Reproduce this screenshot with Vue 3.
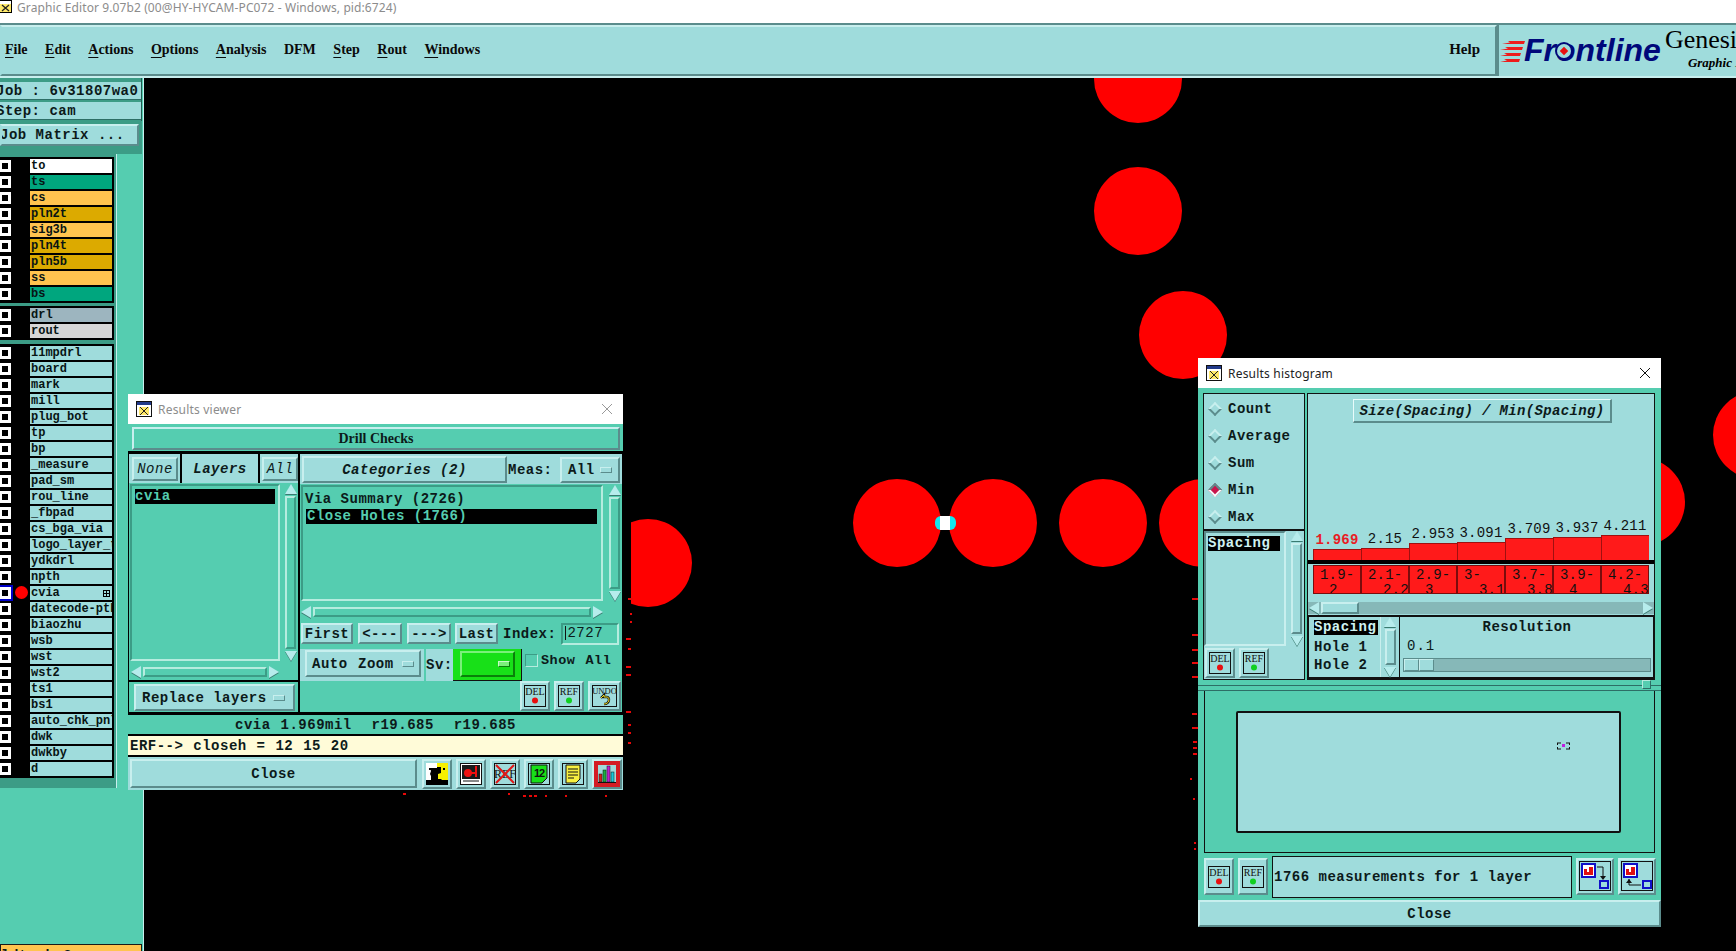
<script setup>
const menus = [
  { k: 'F', r: 'ile' }, { k: 'E', r: 'dit' }, { k: 'A', r: 'ctions' }, { k: 'O', r: 'ptions' },
  { k: 'A', r: 'nalysis' }, { k: '', r: 'DFM' }, { k: 'S', r: 'tep' }, { k: 'R', r: 'out' }, { k: 'W', r: 'indows' },
]

// board / drill / misc layer groups of the matrix column
const boardLayers = [
  { n: 'to', c: '#ffffff' }, { n: 'ts', c: '#00a67e' }, { n: 'cs', c: '#ffc44f' },
  { n: 'pln2t', c: '#dcaa00' }, { n: 'sig3b', c: '#ffc44f' }, { n: 'pln4t', c: '#dcaa00' },
  { n: 'pln5b', c: '#dcaa00' }, { n: 'ss', c: '#ffc44f' }, { n: 'bs', c: '#00a67e' },
]
const drillLayers = [{ n: 'drl', c: '#9db5bf' }, { n: 'rout', c: '#d6d6d6' }]
const miscLayers = ['11mpdrl', 'board', 'mark', 'mill', 'plug_bot', 'tp', 'bp', '_measure', 'pad_sm', 'rou_line',
  '_fbpad', 'cs_bga_via', 'logo_layer_top', 'ydkdrl', 'npth', 'cvia', 'datecode-pth', 'biaozhu', 'wsb', 'wst',
  'wst2', 'ts1', 'bs1', 'auto_chk_pnl', 'dwk', 'dwkby', 'd']

const circles = [[1138, 78], [1138, 210], [1183, 334], [897, 522], [993, 522], [1103, 522], [1203, 522], [648, 562], [1641, 501], [1757, 434]]
const dots = [[628, 597, 5], [630, 612, 2], [630, 620, 2], [626, 637, 5], [628, 647, 3], [626, 665, 5], [626, 673, 5],
  [626, 710, 5], [628, 723, 3], [628, 731, 3], [628, 741, 3], [403, 792, 3], [508, 792, 2], [523, 794, 3], [529, 794, 3],
  [534, 794, 3], [545, 794, 2], [565, 794, 2], [605, 794, 2], [1192, 597, 6], [1192, 633, 6], [1192, 648, 6], [1192, 661, 6],
  [1192, 675, 6], [1192, 712, 5], [1192, 726, 6], [1193, 740, 4], [1193, 746, 4], [1193, 752, 4], [1190, 777, 2], [1193, 797, 2], [1194, 841, 2], [1194, 847, 2]]

const bars = [
  { v: '1.969', h: 11, min: true, a: '1.9-', b: '2', i: 9 },
  { v: '2.15', h: 12, a: '2.1-', b: '2.2', i: 15 },
  { v: '2.953', h: 17, a: '2.9-', b: '3', i: 9 },
  { v: '3.091', h: 18, a: '3-', b: '3.1', i: 15 },
  { v: '3.709', h: 22, a: '3.7-', b: '3.8', i: 15 },
  { v: '3.937', h: 23, a: '3.9-', b: '4', i: 9 },
  { v: '4.211', h: 25, a: '4.2-', b: '4.3', i: 15 },
]
const stats = [
  { n: 'Count' }, { n: 'Average' }, { n: 'Sum' }, { n: 'Min', on: true }, { n: 'Max' },
]
const statusLine = 'cvia 1.969mil  r19.685  r19.685'
</script>

<template>
  <div class="screen mono">
    <div class="apptitle">
      <svg class="appicon" width="13" height="13" viewBox="0 0 13 13"><rect x="0.5" y="0.5" width="12" height="12" fill="#fff" stroke="#000"/><rect x="1" y="4" width="11" height="8" fill="#ffe96a"/><path d="M3 5l7 6M10 5l-7 6" stroke="#222" stroke-width="1.3"/></svg>
      <span>Graphic Editor 9.07b2 (00@HY-HYCAM-PC072 - Windows, pid:6724)</span>
    </div>

    <div class="menubar">
      <div class="menus">
        <span v-for="m in menus" :key="m.r"><u>{{ m.k }}</u>{{ m.r }}</span>
        <span class="help">Help</span>
      </div>
      <div class="logo">
        <svg class="speed" width="25" height="24" viewBox="0 0 25 24"><path d="M8 1h17l-1 3H2l8-1.500zM5 7h18l-1 3H0l8-1.500zM4 13h17l-1 3H0l7-1.500zM4 19h16l-1 3H0l7-1.500z" fill="#ee1c1c"/></svg>
        <span class="frontline">Fr<span class="oh">o<i></i></span>ntline</span>
        <div class="genesis">
          <span class="gen">Genesis 2000</span>
          <span class="gra">Graphic Editor</span>
        </div>
      </div>
    </div>

    <div class="main">
      <aside class="side">
        <div class="infobox">
          <div class="info"><span class="cut">Job : 6v31807wa0</span></div>
          <div class="info"><span class="cut">Step: cam</span></div>
        </div>
        <div class="matrixbox">
          <div class="matrixbtn"><span class="cut2">Job Matrix ...</span></div>
        </div>
        <div class="layers">
          <div class="group">
            <div v-for="l in boardLayers" :key="l.n" class="lrow">
              <span class="chk"></span><span class="lbl" :style="{ background: l.c }">{{ l.n }}</span>
            </div>
          </div>
          <div class="group">
            <div v-for="l in drillLayers" :key="l.n" class="lrow">
              <span class="chk"></span><span class="lbl" :style="{ background: l.c }">{{ l.n }}</span>
            </div>
          </div>
          <div class="group">
            <div v-for="n in miscLayers" :key="n" class="lrow">
              <span class="chk" :class="{ cur: n === 'cvia' }"></span>
              <span v-if="n === 'cvia'" class="reddot"></span>
              <span class="lbl plain">{{ n }}<svg v-if="n === 'cvia'" class="aff" width="7" height="7" viewBox="0 0 7 7"><rect x=".5" y=".5" width="6" height="6" fill="none" stroke="#000"/><path d="M3.5 1v5M1 3.500h5" stroke="#000"/></svg></span>
            </div>
          </div>
        </div>
        <div class="sideyellow">ldt ab  8</div>
      </aside>

      <div class="canvas">
        <svg width="1592" height="873" viewBox="144 77 1592 873">
          <circle v-for="c in circles" :key="c[0] + '-' + c[1]" :cx="c[0]" :cy="c[1]" r="44" fill="#ff0000" />
          <rect x="623" y="480" width="8" height="320" fill="#000" />
          <rect x="935" y="515" width="21" height="14" rx="6" fill="#10e8f0" />
          <rect x="940" y="515" width="10" height="14" fill="#fff" />
          <rect v-for="d in dots" :key="d[0] + '_' + d[1]" :x="d[0]" :y="d[1]" :width="d[2]" height="2" fill="#e80808" />
        </svg>
      </div>
    </div>

    <!-- Results viewer window -->
    <section class="win viewer">
      <header class="wtitle off">
        <svg width="16" height="16" viewBox="0 0 16 16"><rect x=".5" y=".5" width="15" height="15" fill="#fff" stroke="#111"/><rect x="1" y="1" width="14" height="3" fill="#223a8a"/><rect x="3" y="6" width="10" height="8" fill="#ffe96a"/><path d="M4 6l8 8M12 6l-8 8" stroke="#222"/></svg>
        <span>Results viewer</span>
        <svg class="x" width="12" height="12" viewBox="0 0 12 12"><path d="M1 1l10 10M11 1L1 11" stroke="#999" stroke-width="1"/></svg>
      </header>

      <div class="vbtnrow"><div class="rb drill">Drill Checks</div></div>

      <div class="vmid">
        <div class="vleft">
          <div class="lhead">
            <div class="rb none ital thin">None</div>
            <div class="ltitle ital">Layers</div>
            <div class="rb all ital thin">All</div>
          </div>
          <div class="llist">
            <div class="sunk lbox"><div class="sel">cvia</div></div>
            <div class="vs"><i class="up"></i><b></b><i class="down"></i></div>
          </div>
          <div class="hs lhs"><i class="left"></i><b></b><i class="right"></i></div>
          <div class="replace"><div class="rb opt repl">Replace layers<em></em></div></div>
        </div>

        <div class="vright">
          <div class="rhead">
            <div class="rb cat ital">Categories (2)</div>
            <span class="meas">Meas:</span>
            <div class="rb opt allopt">All<em></em></div>
          </div>
          <div class="rlist">
            <div class="sunk rbox">
              <div class="item first-item">Via Summary (2726)</div>
              <div class="item sel">Close Holes (1766)</div>
            </div>
            <div class="vs"><i class="up"></i><b></b><i class="down"></i></div>
          </div>
          <div class="hs rhs"><i class="left"></i><b></b><i class="right"></i></div>
          <div class="nav">
            <div class="rb first">First</div>
            <div class="rb arrow">&lt;---</div>
            <div class="rb arrow">---&gt;</div>
            <div class="rb last">Last</div>
            <span class="idx">Index:</span>
            <div class="indexbox"><span class="caret"></span>2727</div>
          </div>
          <div class="zoomrow">
            <div class="zoombg"><div class="rb opt zoombtn">Auto Zoom<em></em></div></div>
            <div class="svlbl">Sv:</div>
            <div class="svgreen"><div class="svbtn"><em></em></div></div>
            <span class="cb"></span><span class="showall">Show All</span>
          </div>
          <div class="actions">
            <div class="ib">
              <svg width="26" height="26" viewBox="0 0 26 26"><rect x="2.500" y="2.500" width="21" height="21" fill="none" stroke="#111"/><text x="13" y="12" class="tiny">DEL</text><circle cx="13" cy="17.500" r="3" fill="#e81010"/></svg>
            </div>
            <div class="ib">
              <svg width="26" height="26" viewBox="0 0 26 26"><rect x="2.500" y="2.500" width="21" height="21" fill="none" stroke="#111"/><text x="13" y="12" class="tiny">REF</text><circle cx="13" cy="17.500" r="3" fill="#10d020"/></svg>
            </div>
            <div class="ib wide">
              <svg width="29" height="26" viewBox="0 0 29 26"><rect x="2.500" y="2.500" width="24" height="21" fill="none" stroke="#111"/><text x="14.500" y="11" class="tiny undo">UNDO</text><path d="M11 15l3-3v2h3c3 0 3 7-3 7" fill="none" stroke="#111" stroke-width="2.400"/><path d="M11 15l3-3v2h3c3 0 3 7-3 7" fill="none" stroke="#f0e020" stroke-width="1"/></svg>
            </div>
          </div>
        </div>
      </div>

      <div class="vstatus">{{ statusLine }}</div>
      <div class="verf">ERF--&gt; closeh = 12 15 20</div>

      <div class="vbottom">
        <div class="rb closebtn">Close</div>
        <div class="ib">
          <svg width="26" height="26" viewBox="0 0 26 26"><rect x="2" y="2" width="11" height="22" fill="#fff"/><rect x="13" y="2" width="11" height="22" fill="#f6f000"/><path d="M2 24v-5h5v-4l-1-2 1-3-1-3h3l4 0v17z" fill="#000"/><path d="M13 24v-6h1v-5l3-1v-6h-4v-4 0 22zM13 24h11v-5h-6l-1-1h-4z" fill="#000"/><rect x="5" y="7" width="2" height="2" fill="#000"/><rect x="19" y="7" width="2" height="2" fill="#000"/></svg>
        </div>
        <div class="ib">
          <svg width="26" height="26" viewBox="0 0 26 26"><rect x="2.500" y="2.500" width="21" height="21" fill="#fff" stroke="#111"/><rect x="4" y="4" width="18" height="14" fill="#1a1a1a"/><circle cx="10" cy="12" r="4" fill="#f01010"/><path d="M13 12h5M18 5v11" stroke="#f01010" stroke-width="2"/><path d="M5 20h16" stroke="#111"/></svg>
        </div>
        <div class="ib">
          <svg width="26" height="26" viewBox="0 0 26 26"><rect x="2.500" y="2.500" width="21" height="21" fill="none" stroke="#111"/><text x="13" y="17" class="tiny big">REF</text><path d="M4 4l18 18M22 4L4 22" stroke="#e01818" stroke-width="2"/></svg>
        </div>
        <div class="ib">
          <svg width="26" height="26" viewBox="0 0 26 26"><rect x="2.500" y="2.500" width="21" height="21" fill="none" stroke="#111"/><path d="M5 4h16v13l-5 5H5z" fill="#18e018" stroke="#111"/><text x="13" y="16" class="half">12</text></svg>
        </div>
        <div class="ib">
          <svg width="26" height="26" viewBox="0 0 26 26"><rect x="2.500" y="2.500" width="21" height="21" fill="none" stroke="#111"/><path d="M6 4h14v14l-4 4H6z" fill="#f8f040" stroke="#111"/><path d="M8 8h10M8 11h10M8 14h10M8 17h6" stroke="#111"/></svg>
        </div>
        <div class="ib chartbtn">
          <svg width="26" height="26" viewBox="0 0 26 26"><rect x="2" y="2" width="22" height="22" fill="#9fdcdc" stroke="#d41c24" stroke-width="4"/><path d="M4 21.500h18" stroke="#111"/><rect x="5" y="13" width="3" height="8" fill="#d02020" stroke="#111" stroke-width=".5"/><rect x="9" y="9" width="3" height="12" fill="#18b040" stroke="#111" stroke-width=".5"/><rect x="13" y="5" width="3" height="16" fill="#c020d0" stroke="#111" stroke-width=".5"/><rect x="17" y="11" width="3" height="10" fill="#18c8d8" stroke="#111" stroke-width=".5"/></svg>
        </div>
      </div>
    </section>

    <!-- Results histogram window -->
    <section class="win histo">
      <header class="wtitle">
        <svg width="16" height="16" viewBox="0 0 16 16"><rect x=".5" y=".5" width="15" height="15" fill="#fff" stroke="#111"/><rect x="1" y="1" width="14" height="3" fill="#223a8a"/><rect x="3" y="6" width="10" height="8" fill="#ffe96a"/><path d="M4 6l8 8M12 6l-8 8" stroke="#222"/></svg>
        <span>Results histogram</span>
        <svg class="x" width="12" height="12" viewBox="0 0 12 12"><path d="M1 1l10 10M11 1L1 11" stroke="#111" stroke-width="1"/></svg>
      </header>

      <div class="htop">
        <div class="hleft">
          <div class="radios">
            <div v-for="s in stats" :key="s.n" class="radio">
              <span class="dia" :class="{ on: s.on }"></span>{{ s.n }}
            </div>
          </div>
          <div class="hlist">
            <div class="sunk hbox"><div class="sel">Spacing</div></div>
            <div class="vs"><i class="up"></i><b></b><i class="down"></i></div>
          </div>
          <div class="hbtns">
            <div class="ib">
              <svg width="26" height="26" viewBox="0 0 26 26"><rect x="2.500" y="2.500" width="21" height="21" fill="none" stroke="#111"/><text x="13" y="12" class="tiny">DEL</text><circle cx="13" cy="17.500" r="3" fill="#e81010"/></svg>
            </div>
            <div class="ib">
              <svg width="26" height="26" viewBox="0 0 26 26"><rect x="2.500" y="2.500" width="21" height="21" fill="none" stroke="#111"/><text x="13" y="12" class="tiny">REF</text><circle cx="13" cy="17.500" r="3" fill="#10d020"/></svg>
            </div>
          </div>
        </div>

        <div class="hright">
          <div class="graph">
            <div class="gtitle"><span>Size(Spacing) / Min(Spacing)</span></div>
            <div class="gbars">
              <div v-for="b in bars" :key="b.v" class="gcol">
                <span class="gval" :class="{ min: b.min }">{{ b.v }}</span>
                <div class="gbar" :style="{ height: b.h + 'px' }"></div>
              </div>
            </div>
            <div class="gaxis"></div>
            <div class="glabels">
              <div v-for="b in bars" :key="b.a" class="glabel">
                <span>{{ b.a }}</span>
                <span :style="{ paddingLeft: b.i + 'px' }">{{ b.b }}</span>
              </div>
            </div>
            <div class="hs ghs"><i class="left"></i><b></b><i class="right"></i></div>
          </div>
          <div class="under">
            <div class="ulist">
              <div class="sel">Spacing</div>
              <div>Hole 1</div>
              <div>Hole 2</div>
            </div>
            <div class="vs uvs"><i class="up"></i><b></b><i class="down"></i></div>
            <div class="resol">
              <div class="rtitle">Resolution</div>
              <div class="rval">0.1</div>
              <div class="slider"><b></b><b></b></div>
            </div>
          </div>
        </div>
      </div>

      <div class="sash"><span></span></div>

      <div class="preview">
        <div class="pinner">
          <svg class="mark" width="13" height="8" viewBox="0 0 13 8"><path d="M0 1h4M9 1h4M0 7h4M9 7h4M.5 1v2M12.500 1v2M.5 5v2M12.500 5v2" stroke="#111" fill="none"/><rect x="5" y="2" width="3" height="3" fill="#c020e0"/></svg>
        </div>
      </div>

      <div class="hfoot">
        <div class="ib">
          <svg width="26" height="26" viewBox="0 0 26 26"><rect x="2.500" y="2.500" width="21" height="21" fill="none" stroke="#111"/><text x="13" y="12" class="tiny">DEL</text><circle cx="13" cy="17.500" r="3" fill="#e81010"/></svg>
        </div>
        <div class="ib">
          <svg width="26" height="26" viewBox="0 0 26 26"><rect x="2.500" y="2.500" width="21" height="21" fill="none" stroke="#111"/><text x="13" y="12" class="tiny">REF</text><circle cx="13" cy="17.500" r="3" fill="#10d020"/></svg>
        </div>
        <div class="hmsg">1766 measurements for 1 layer</div>
        <div class="ib swap">
          <svg width="34" height="32" viewBox="0 0 34 32"><rect x="1.500" y="1.500" width="31" height="29" fill="none" stroke="#111"/><rect x="4" y="4" width="13" height="13" fill="#fff" stroke="#1010c8" stroke-width="2"/><path d="M6 15v-6h3v3h2V7h4v8z" fill="#e01010"/><path d="M19 7h6v11" fill="none" stroke="#111"/><path d="M22 16h6l-3 4z" fill="#111"/><rect x="22" y="21" width="8" height="7" fill="none" stroke="#1010c8" stroke-width="2"/></svg>
        </div>
        <div class="ib swap">
          <svg width="34" height="32" viewBox="0 0 34 32"><rect x="1.500" y="1.500" width="31" height="29" fill="none" stroke="#111"/><rect x="4" y="4" width="13" height="13" fill="#fff" stroke="#1010c8" stroke-width="2"/><path d="M6 15v-6h3v3h2V7h4v8z" fill="#e01010"/><path d="M9 19v6h12" fill="none" stroke="#111"/><path d="M6 23h6l-3-4z" fill="#111"/><rect x="23" y="21" width="8" height="7" fill="none" stroke="#1010c8" stroke-width="2"/></svg>
        </div>
      </div>

      <div class="rb hclose">Close</div>
    </section>
  </div>
</template>

<style>
html, body { margin: 0; background: #000; overflow: hidden; }
</style>

<style scoped>
.screen {
  width: 1736px;
  height: 951px;
  position: relative;
  overflow: hidden;
  background: #000;
  display: flex;
  flex-direction: column;
}
.mono {
  font-family: "Liberation Mono", monospace;
  font-weight: bold;
  font-size: 14px;
  letter-spacing: 0.5px;
  color: #0c1a1a;
}
.apptitle {
  height: 23px;
  background: #fff;
  display: flex;
  align-items: center;
  gap: 5px;
  font: 12px "Noto Sans", sans-serif;
  letter-spacing: 0.1px;
  color: #8c8c8c;
  padding-bottom: 8px;
  box-sizing: border-box;
}
.appicon { flex: none; margin-top: -2px; margin-left: -1px; }

.menubar {
  height: 55px;
  display: flex;
  background: #9fdcdc;
  border-top: 2px solid #5b8c8c;
  border-bottom: 2px solid #c8efee;
  box-sizing: border-box;
}
.menus {
  flex: 1;
  display: flex;
  align-items: center;
  gap: 17.5px;
  padding: 0 15px 2px 3px;
  border: 2px solid;
  border-color: #c8efee #5b8c8c #5b8c8c transparent;
  font: bold 14px "Liberation Serif", serif;
  letter-spacing: 0;
  color: #0a0a0a;
}
.menus u { text-underline-offset: 3px; }
.help { margin-left: auto; font-size: 15px; }
.logo {
  width: 239px;
  flex: none;
  position: relative;
  display: flex;
  align-items: center;
  padding-left: 1px;
  box-sizing: border-box;
  border-left: 2px solid #5b8c8c;
  overflow: hidden;
}
.speed { flex: none; margin-top: 2px; }
.frontline {
  font: italic bold 32px "Liberation Sans", sans-serif;
  letter-spacing: 0;
  color: #00087a;
  margin-left: -1px;
}
.oh { position: relative; }
.oh i {
  position: absolute;
  left: 1px;
  top: 12px;
  width: 14px;
  height: 14px;
  border-radius: 50%;
  background: #9fdcdc;
  box-shadow: 0 0 0 2px #00087a;
}
.oh i::after {
  content: "";
  position: absolute;
  left: 4px;
  top: 4px;
  width: 6px;
  height: 6px;
  background: #e81010;
  transform: rotate(45deg);
}
.genesis {
  margin-left: 4px;
  display: flex;
  flex-direction: column;
  white-space: nowrap;
  flex: none;
  margin-top: -6px;
}
.gen { font: 26px "Liberation Serif", serif; letter-spacing: 0; color: #000; line-height: 31px; }
.gra { font: italic bold 13px "Liberation Serif", serif; letter-spacing: 0; color: #000; margin-left: 23px; line-height: 16px; }

.main { flex: 1; display: flex; min-height: 0; }
.side {
  width: 144px;
  flex: none;
  background: #55cdb0;
  border-right: 1px solid #c8efee;
  box-sizing: border-box;
  position: relative;
  overflow: hidden;
}
.infobox {
  width: 142px;
  box-sizing: border-box;
  background: #3c9c86;
  padding-top: 4px;
  height: 43px;
  display: flex;
  flex-direction: column;
  gap: 2px;
  border-right: 1px solid #1f5a50;
}
.info {
  height: 18px;
  background: #9fdcdc;
  line-height: 18px;
  overflow: hidden;
  white-space: nowrap;
  box-shadow: inset 0 -1px 0 #2d6e66;
}
.cut { margin-left: -4px; display: block; }
.matrixbox {
  width: 142px;
  height: 33px;
  background: #3c9c86;
  box-sizing: border-box;
  padding: 3px 3px 7px 0;
}
.matrixbtn {
  height: 22px;
  background: #9fdcdc;
  border: 2px solid;
  border-color: #c8efee #5b8c8c #5b8c8c transparent;
  box-sizing: border-box;
  line-height: 18px;
  white-space: nowrap;
  overflow: hidden;
}
.cut2 { display: block; margin-left: -2px; }
.layers {
  width: 117px;
  background: #3c9c86;
  padding-top: 3px;
  padding-right: 2px;
  box-sizing: border-box;
  border-right: 1px solid #c8efee;
  padding-bottom: 4px;
  display: flex;
  flex-direction: column;
  gap: 3px;
  height: 634px;
}
.group { background: #000; padding-top: 2px; padding-right: 2px; flex: none; }
.group:last-child { margin-top: 1px; }
.lrow { height: 16px; display: flex; position: relative; box-sizing: border-box; padding-bottom: 2px; }
.chk {
  width: 6px;
  height: 6px;
  margin-top: 1px;
  border: 3px solid #fff;
  border-left-width: 2px;
  background: #000;
  box-sizing: content-box;
  flex: none;
}
.chk.cur { outline: 2px solid #0000c8; outline-offset: 0; }
.reddot {
  position: absolute;
  left: 15px;
  top: 0;
  width: 13px;
  height: 13px;
  border-radius: 50%;
  background: #f00;
}
.lbl {
  margin-left: 19px;
  flex: 1;
  min-width: 0;
  height: 14px;
  line-height: 14px;
  padding-left: 1px;
  font-size: 12px;
  letter-spacing: 0;
  color: #071414;
  overflow: hidden;
  white-space: nowrap;
  position: relative;
}
.lbl.plain { background: #9fdcdc; }
.aff { position: absolute; right: 2px; top: 4px; }
.sideyellow {
  position: absolute;
  left: 0;
  right: 1px;
  top: 866px;
  height: 30px;
  background: #ffc44f;
  border: 1px solid #1a1a1a;
  padding-top: 3px;
  line-height: 16px;
  white-space: pre;
}

.canvas { flex: 1; background: #000; min-width: 0; overflow: hidden; }
.canvas svg { display: block; }

/* floating windows */
.win {
  position: absolute;
  background: #55cdb0;
  box-sizing: border-box;
  display: flex;
  flex-direction: column;
}
.viewer { left: 128px; top: 394px; width: 495px; height: 396px; }
.histo { left: 1198px; top: 358px; width: 463px; height: 569px; }
.wtitle {
  height: 30px;
  flex: none;
  background: #fff;
  display: flex;
  align-items: center;
  gap: 6px;
  padding-left: 8px;
  padding-right: 10px;
  font: 12px "Noto Sans", sans-serif;
  letter-spacing: 0.2px;
  color: #222;
}
.wtitle.off { color: #8c8c8c; }
.x { margin-left: auto; }

.rb {
  box-sizing: border-box;
  background: #9fdcdc;
  border: 2px solid;
  border-color: #c8efee #5b8c8c #5b8c8c #c8efee;
  display: flex;
  align-items: center;
  justify-content: center;
  white-space: pre;
  flex: none;
}
.ib {
  width: 30px;
  height: 30px;
  flex: none;
  box-sizing: border-box;
  background: #9fdcdc;
  border: 2px solid;
  border-color: #c8efee #5b8c8c #5b8c8c #c8efee;
}
.ib svg { display: block; }
.ib.wide { width: 33px; }
.tiny { font: 10px "Liberation Serif", serif; letter-spacing: 0; text-anchor: middle; fill: #111; }
.undo { font-size: 8.500px; }
.big { font-size: 12px; }
.half { font: bold 11px "Liberation Sans", sans-serif; letter-spacing: -1px; text-anchor: middle; fill: #111; }
.ital { font-style: italic; }
.thin { font-weight: normal; }
.sel { background: #000; color: #55cdb0; height: 15px; line-height: 15px; padding-left: 0; }
.sunk {
  box-sizing: border-box;
  border: 2px solid;
  border-color: #3c9c86 #b6ecdf #b6ecdf #3c9c86;
  background: #55cdb0;
}
em { display: block; width: 12px; height: 6px; box-sizing: border-box; background: #9fdcdc; border: 1px solid; border-color: #c8efee #5b8c8c #5b8c8c #c8efee; flex: none; }
.opt { justify-content: space-between; }

.vs { width: 13px; flex: none; display: flex; flex-direction: column; align-items: center; gap: 2px; }
.vs b { flex: 1; width: 11px; box-sizing: border-box; border: 2px solid; border-color: #b6ecdf #3c9c86 #3c9c86 #b6ecdf; background: #55cdb0; }
.hs { display: flex; align-items: center; gap: 2px; height: 11px; }
.hs b { flex: 1; height: 10px; box-sizing: border-box; border: 2px solid; border-color: #b6ecdf #3c9c86 #3c9c86 #b6ecdf; background: #55cdb0; }
.vs i, .hs i { display: block; width: 0; height: 0; flex: none; border: 6px solid transparent; filter: drop-shadow(0 1px 0 #3a7a70); }
.vs i.up { border-top-width: 0; border-bottom: 10px solid #b6ecec; }
.vs i.down { border-bottom-width: 0; border-top: 10px solid #b6ecec; }
.hs i.left { border-left-width: 0; border-right: 10px solid #b6ecec; }
.hs i.right { border-right-width: 0; border-left: 10px solid #b6ecec; }

.vbtnrow { height: 30px; flex: none; padding: 3px 3px 4px 4px; box-sizing: border-box; border-bottom: 3px solid #000; }
.drill { height: 23px; font: bold 14px "Liberation Serif", serif; letter-spacing: 0; background: #55cdb0; }
.vmid { height: 258px; flex: none; display: flex; background: #000; gap: 2px; padding-left: 1px; padding-right: 1px; box-sizing: border-box; }
.vleft { width: 169px; flex: none; background: #55cdb0; display: flex; flex-direction: column; }
.lhead { height: 29px; flex: none; display: flex; align-items: center; padding-left: 3px; background: #9fdcdc; }
.none { width: 46px; height: 24px; margin-top: 1px; }
.ltitle { width: 80px; height: 29px; margin-left: 2px; background: #9fdcdc; display: flex; align-items: center; justify-content: center; padding-top: 1px; box-sizing: border-box; border-left: 2px solid #000; border-right: 2px solid #000; }
.all { width: 36px; height: 24px; margin-left: 2px; margin-top: 1px; }
.llist { height: 178px; flex: none; display: flex; gap: 4px; padding: 1px 0 0 1px; box-sizing: border-box; }
.lbox { width: 150px; padding: 3px; }
.lhs { width: 148px; margin: 5px 0 0 2px; flex: none; }
.replace { flex: 1; margin-top: 3px; background: #55cdb0; border-top: 2px solid #000; padding: 2px 2px 0 5px; }
.repl { height: 27px; padding: 0 8px 0 6px; width: 161px; }

.vright { flex: 1; min-width: 0; background: #55cdb0; display: flex; flex-direction: column; }
.rhead { height: 30px; flex: none; display: flex; align-items: center; background: #9fdcdc; padding: 1px 2px 0; box-sizing: border-box; }
.cat { width: 205px; height: 27px; }
.meas { margin-left: 1px; width: 52px; }
.allopt { width: 60px; height: 26px; padding: 0 6px; }
.rlist { height: 116px; flex: none; display: flex; gap: 5px; padding-left: 1px; box-sizing: border-box; margin-top: 1px; }
.rbox { width: 302px; padding: 3px 4px 3px 1px; }
.item { height: 18px; line-height: 18px; padding-left: 1px; }
.first-item { height: 19px; }
.item.sel { height: 15px; line-height: 15px; margin-left: 2px; }
.rhs { width: 302px; margin-top: 5px; margin-left: 1px; flex: none; }
.nav { height: 21px; margin-top: 6px; flex: none; display: flex; align-items: center; padding-left: 1px; }
.nav .rb { height: 21px; }
.first { width: 52px; }
.arrow { width: 44px; margin-left: 5px; }
.last { width: 43px; margin-left: 4px; }
.idx { margin-left: 5px; }
.indexbox {
  width: 58px;
  height: 22px;
  box-sizing: border-box;
  margin-left: 5px;
  border: 2px solid;
  border-color: #3c9c86 #b6ecdf #b6ecdf #3c9c86;
  font-weight: normal;
  line-height: 16px;
  padding-left: 4px;
  position: relative;
}
.caret { position: absolute; left: 2px; top: 1px; width: 1px; height: 14px; background: #111; }
.zoomrow { height: 32px; margin-top: 5px; flex: none; display: flex; align-items: stretch; }
.zoombg { width: 124px; background: #9fdcdc; padding: 1px 2px 3px 5px; box-sizing: border-box; }
.zoombtn { height: 27px; padding: 0 5px 0 5px; width: 116px; word-spacing: 1.500px; }
.svlbl { width: 27px; margin-left: 2px; background: #9fdcdc; line-height: 32px; }
.svgreen { width: 69px; background: #18e018; box-sizing: border-box; padding: 2px 6px 3px 7px; border-right: 1px solid #111; border-bottom: 1px solid #111; }
.svbtn { height: 100%; box-sizing: border-box; border: 2px solid; border-color: #7af07a #0a800a #0a800a #7af07a; display: flex; align-items: center; justify-content: flex-end; padding-right: 3px; }
.svbtn em { background: #7af07a; border-color: #c8f8c8 #0a800a #0a800a #c8f8c8; }
.cb { width: 13px; height: 13px; box-sizing: border-box; border: 1px solid; border-color: #3c9c86 #b6ecdf #b6ecdf #3c9c86; margin: 5px 3px 0 3px; flex: none; }
.showall { line-height: 24px; font-size: 13.500px; white-space: pre; word-spacing: 1.500px; }
.actions { flex: 1; display: flex; justify-content: flex-end; align-items: center; gap: 4px; padding: 0 1px 2px 0; }

.vstatus { height: 22px; flex: none; box-sizing: border-box; border-top: 3px solid #000; text-align: center; line-height: 20px; white-space: pre; word-spacing: 1px; }
.verf { height: 21px; flex: none; box-sizing: border-box; border-top: 2px solid #000; background: #fffbd8; line-height: 20px; padding-left: 2px; white-space: pre; word-spacing: 1px; }
.vbottom { flex: 1; border-top: 2px solid #000; background: #9fdcdc; display: flex; align-items: center; gap: 4px; padding: 0 1px 0 2px; }
.closebtn { width: 287px; height: 29px; margin-right: 1px; }

/* histogram */
.htop { height: 292px; flex: none; display: flex; gap: 2px; padding: 5px 6px 0 5px; box-sizing: border-box; background: #55cdb0; }
.hleft { width: 102px; flex: none; background: #9fdcdc; border: 1px solid #111; box-sizing: border-box; height: 287px; display: flex; flex-direction: column; }
.radios { height: 137px; flex: none; border-bottom: 2px solid #111; box-sizing: border-box; padding-top: 1px; }
.radio { height: 27px; display: flex; align-items: center; gap: 6px; padding-left: 4px; }
.dia { width: 10px; height: 10px; transform: rotate(45deg); box-sizing: border-box; border: 2px solid; border-color: #c8efee #5b8c8c #5b8c8c #c8efee; margin: 0 2px; }
.dia.on { background: #c8144c; border-color: #5b8c8c #f4fbfb #f4fbfb #5b8c8c; }
.hlist { height: 115px; flex: none; display: flex; gap: 4px; box-sizing: border-box; }
.hbox { width: 82px; padding: 3px 2px; border-color: #5b8c8c #c8efee #c8efee #5b8c8c; background: #9fdcdc; }
.hbox .sel { color: #cff2f2; width: 72px; }
.hlist .vs b { background: #9fdcdc; border-color: #c8efee #5b8c8c #5b8c8c #c8efee; }
.hbtns { flex: 1; display: flex; gap: 4px; padding-left: 1px; align-items: flex-start; padding-top: 2px; }
.hbtns .ib { width: 30px; }

.hright { flex: 1; min-width: 0; display: flex; flex-direction: column; }
.graph { height: 222px; flex: none; background: #9fdcdc; border: 1px solid #111; border-bottom: 0; box-sizing: border-box; display: flex; flex-direction: column; }
.gtitle { height: 24px; margin: 5px 0 0 45px; width: 259px; flex: none; box-sizing: border-box; background: #9fdcdc; border: 1px solid; border-color: #e8fbfb #5b8c8c #5b8c8c #e8fbfb; border-right-width: 2px; border-bottom-width: 2px; font-style: italic; display: flex; align-items: center; justify-content: center; white-space: pre; letter-spacing: 0.35px; }
.gbars { height: 137px; flex: none; display: flex; align-items: flex-end; padding-left: 5px; }
.gcol { width: 48px; flex: none; display: flex; flex-direction: column; align-items: center; }
.gval { font-weight: normal; font-size: 14px; line-height: 17px; white-space: nowrap; letter-spacing: 0.2px; color: #111; }
.gval.min { color: #e81c24; font-weight: bold; }
.gbar { width: 100%; background: #ff1a1a; box-sizing: border-box; border: 1px solid #a01010; border-bottom: 0; border-right: 0; }
.gaxis { height: 4px; background: #000; flex: none; }
.glabels { height: 29px; flex: none; margin-top: 1px; display: flex; padding-left: 5px; }
.glabel { width: 48px; flex: none; background: #ff1a1a; box-sizing: border-box; border: 1px solid #7a0c0c; overflow: hidden; display: flex; flex-direction: column; padding-top: 2px; padding-left: 6px; font-weight: normal; font-size: 14px; letter-spacing: 0.2px; line-height: 14.500px; color: #111; }
.glabel span { white-space: nowrap; }
.ghs { height: 14px; margin-top: 7px; padding: 0 1px; }
.ghs b { flex: none; width: 38px; height: 12px; background: #9fdcdc; border-color: #c8efee #5b8c8c #5b8c8c #c8efee; position: relative; z-index: 1; }
.ghs { background: linear-gradient(#86b8b8, #86b8b8) no-repeat 0 1px / 100% 12px; }
.ghs i.right { margin-left: auto; }
.under { flex: 1; display: flex; background: #9fdcdc; border: 2px solid #111; border-left-width: 2px; border-bottom-width: 3px; box-sizing: border-box; min-height: 0; }
.ulist { width: 72px; flex: none; padding: 3px 5px; box-sizing: border-box; line-height: 18px; overflow: hidden; white-space: nowrap; border-right: 1px solid #c8efee; }
.ulist .sel { color: #cff2f2; height: 15px; line-height: 15px; margin-bottom: 3px; width: 64px; overflow: hidden; }
.uvs { width: 18px; background: #9fdcdc; }
.uvs b { background: #9fdcdc; border-color: #c8efee #5b8c8c #5b8c8c #c8efee; }
.resol { flex: 1; min-width: 0; border-left: 1px solid #111; padding: 2px 2px 0 3px; }
.rtitle { text-align: center; line-height: 16px; }
.rval { margin-top: 3px; padding-left: 4px; line-height: 16px; font-weight: normal; letter-spacing: 1px; }
.slider { height: 14px; background: #86b8b8; margin-top: 4px; display: flex; border: 1px solid #5b8c8c; box-sizing: border-box; }
.slider b { width: 15px; box-sizing: border-box; background: #9fdcdc; border: 1px solid; border-color: #c8efee #5b8c8c #5b8c8c #c8efee; }

.sash { height: 11px; flex: none; position: relative; border-bottom: 1px solid #2d6e66; box-shadow: inset 0 5px 0 #55cdb0, inset 0 6px 0 #2d6e66; box-sizing: border-box; }
.sash span { position: absolute; right: 10px; top: 0; width: 9px; height: 9px; background: #55cdb0; border: 1px solid; border-color: #b6ecdf #2d6e66 #2d6e66 #b6ecdf; box-sizing: border-box; }
.preview { height: 162px; flex: none; margin: 0 6px; border: 1px solid #111; border-top: 0; background: #55cdb0; box-sizing: border-box; padding: 20px 33px 19px 31px; }
.pinner { height: 100%; background: #9fdcdc; border: 2px solid #111; box-sizing: border-box; border-radius: 2px; position: relative; }
.mark { position: absolute; left: 319px; top: 29px; }
.hfoot { flex: 1; display: flex; align-items: center; gap: 4px; padding: 0 6px; background: #55cdb0; }
.hfoot > .ib:not(.swap) { height: 37px; }
.hfoot > .ib:not(.swap) svg { margin-top: 4px; }
.hmsg { width: 300px; height: 42px; flex: none; box-sizing: border-box; background: #9fdcdc; border: 1px solid #111; padding-left: 1px; line-height: 40px; white-space: pre; }
.swap { width: 38px; height: 37px; }
.hclose { height: 27px; flex: none; }
</style>
